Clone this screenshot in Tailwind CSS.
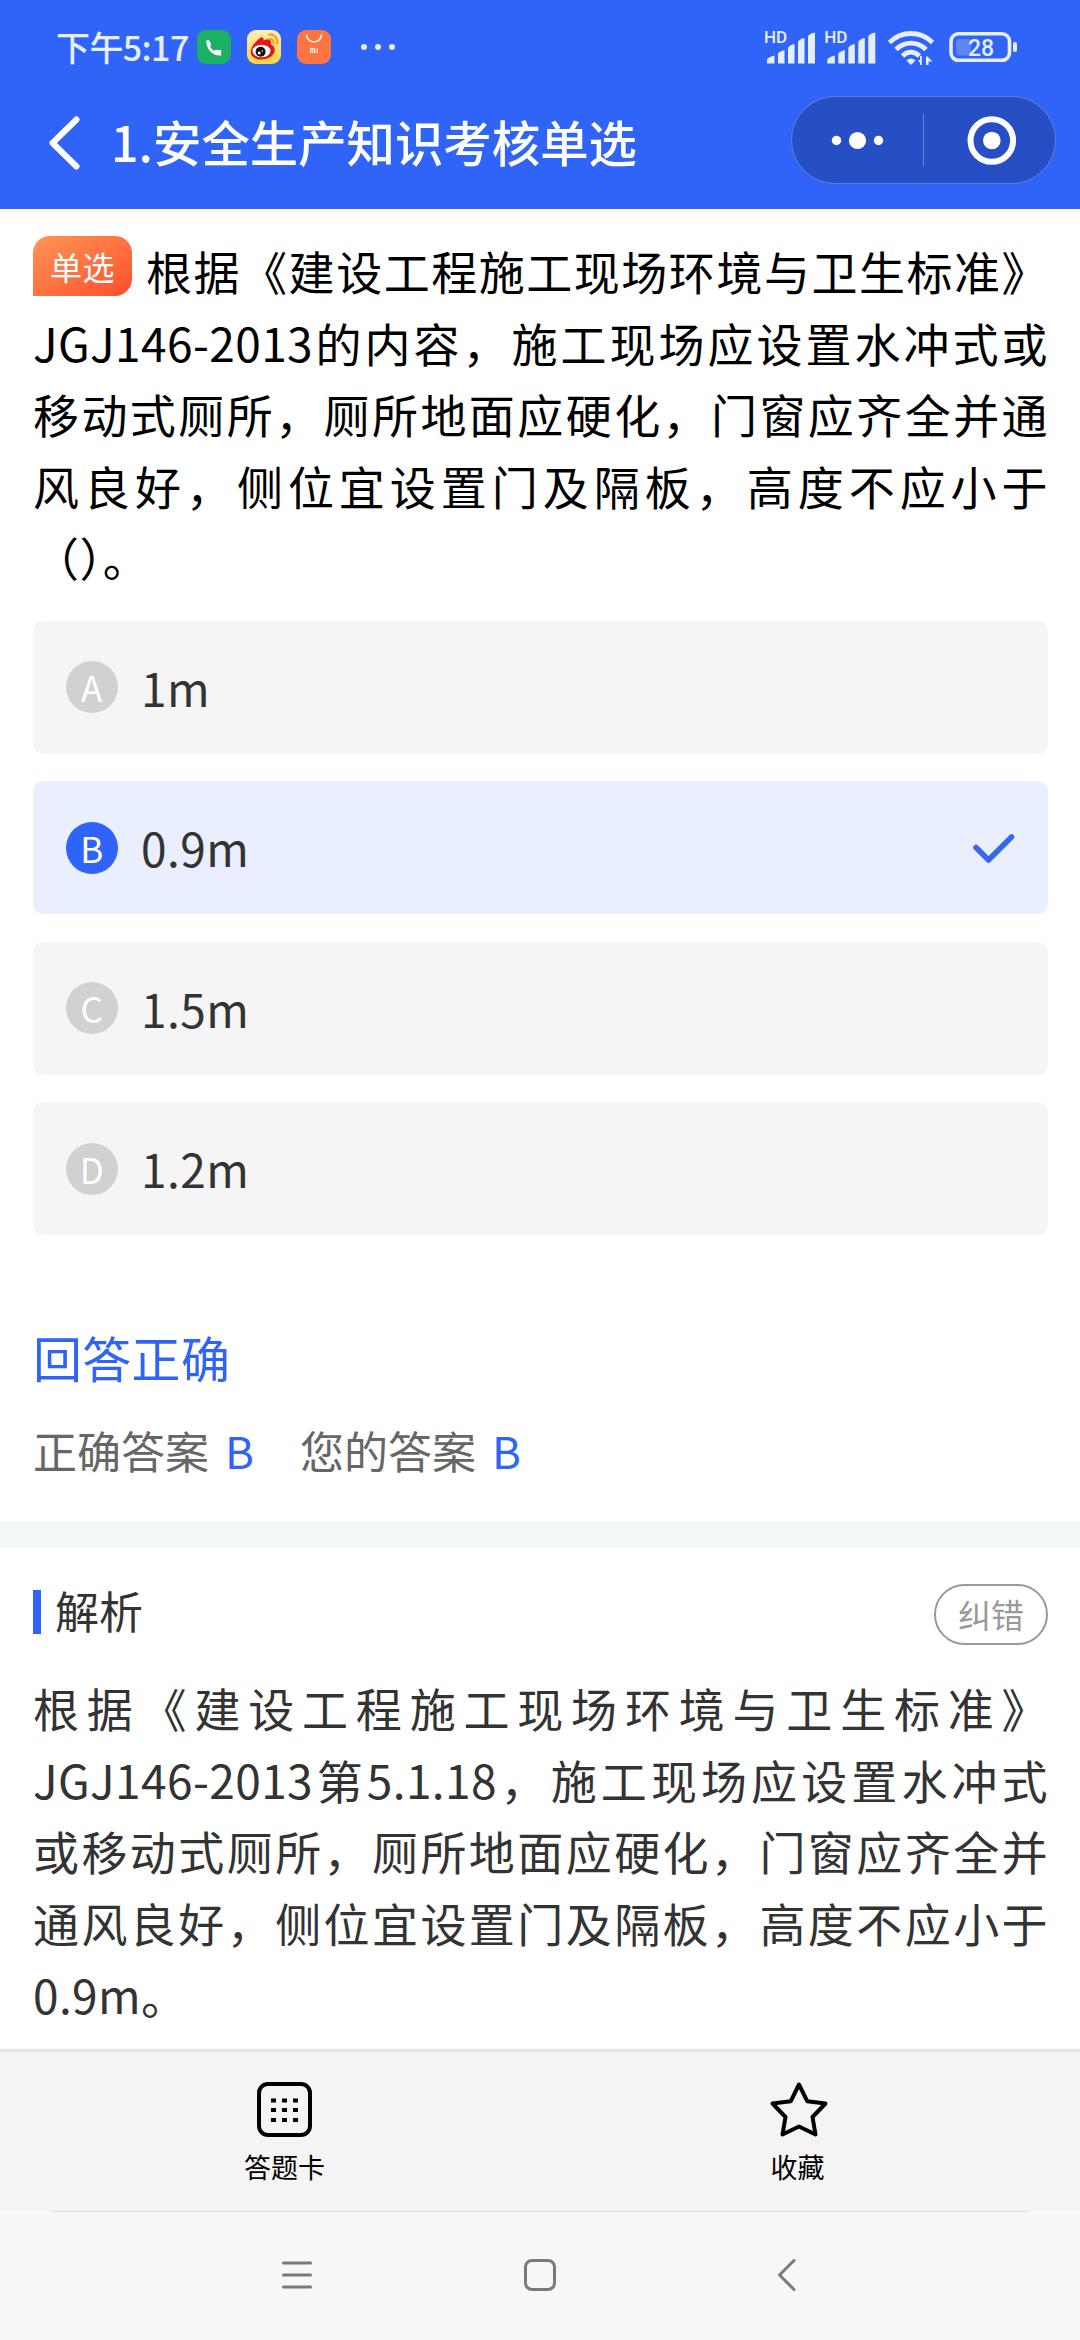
<!DOCTYPE html>
<html lang="zh-CN">
<head>
  <meta charset="UTF-8" />
  <meta name="viewport" content="width=device-width, initial-scale=1.0" />
  <title>安全生产知识考核单选</title>
  <script src="https://cdn.jsdelivr.net/npm/@tailwindcss/browser@4"></script>
</head>
<body class="w-[1080px] h-[2340px] overflow-hidden bg-white text-black font-['Noto_Sans_CJK_SC',sans-serif] flex flex-col">

  <!-- Header -->
  <header class="h-[209px] shrink-0 bg-[#3064f8] text-white">
    <!-- Status bar -->
    <div class="h-[94px] pl-[56px] pr-[62px] flex items-center justify-between">
      <div class="flex items-center">
        <span class="w-[141px] text-[34px] leading-none font-medium text-[#e6edff] whitespace-nowrap tracking-[-0.6px]">下午5:17</span>
        <svg class="w-[34px] h-[34px]" viewBox="0 0 34 34">
          <rect width="34" height="34" rx="9" fill="#1bb063" />
          <path d="M9.2 11.2c.8-1.6 2.4-1.6 3.2-.4l1.6 3c.5 1-.2 1.8-.9 2.4.6 2 2.4 3.9 4.4 4.6.6-.7 1.5-1.3 2.5-.7h4.200v5.300c-7.500 1.500-15-6-15-14.200z" fill="#fff" />
        </svg>
        <svg class="w-[34px] h-[34px] ml-4" viewBox="0 0 34 34">
          <defs>
            <linearGradient id="wb" x1="0" y1="0" x2="0" y2="1">
              <stop offset="0" stop-color="#fdeebb" />
              <stop offset="1" stop-color="#ffd33c" />
            </linearGradient>
          </defs>
          <rect width="34" height="34" rx="9" fill="url(#wb)" />
          <path d="M4 20c1-5 5-9 9-12 2-1.5 4-.5 3.500 2.500 3-1.500 7-2 7.500 1.500l-.3 2.500c3 1 4.500 3.500 4 6.500-.8 5-6.700 8.500-13.700 8.500S2.500 25.500 4 20z" fill="#e6161c" />
          <ellipse cx="14.500" cy="21" rx="9" ry="6.300" fill="#fff" />
          <circle cx="13.600" cy="21.800" r="5" fill="#111" />
          <circle cx="12.200" cy="23" r="1.500" fill="#fff" />
          <circle cx="15.300" cy="21" r=".8" fill="#fff" />
          <path d="M22 4.500c5-.8 9 3.500 8.300 9M22.500 9c2.500-.4 4.300 1.700 3.900 4.200" fill="none" stroke="#f5a21b" stroke-width="2.200" stroke-linecap="round" />
        </svg>
        <svg class="w-[34px] h-[34px] ml-4" viewBox="0 0 34 34">
          <rect width="34" height="34" rx="9" fill="#ff7440" />
          <path d="M9.500 4.500c0 4 3.500 7.500 7.500 7.500s7.500-3.500 7.500-7.500" fill="none" stroke="#fff" stroke-width="1.600" />
          <path d="M13.600 23v-4.200h2.900q1.200 0 1.200 1.200v3M15.700 20.500v2.500M20.200 18.300v4.700" fill="none" stroke="#fff" stroke-width="1.200" />
        </svg>
        <svg class="w-9 h-2 ml-[29px]" viewBox="0 0 36 8" fill="#e6edff">
          <circle cx="4" cy="4" r="3" /><circle cx="18" cy="4" r="3" /><circle cx="32" cy="4" r="3" />
        </svg>
      </div>

      <!-- Signal, wifi, battery -->
      <svg class="w-[254px] h-[40px]" viewBox="764 27 254 40" fill="#e6edff">
        <g>
          <text x="764" y="43" font-family="Roboto" font-size="17" font-weight="500">HD</text>
          <path d="M767 63.500v-3.500q0-2.500 7.500-4.500v8zM778 63.500v-9.500q0-2 6.500-4v13.500zM788 63.500v-15q0-3 6.500-4.500v19.500zM798 63.500v-21q0-3 6.500-4.500v25.500zM808 63.500v-26.500q0-3 7-4.500v31z" />
        </g>
        <g transform="translate(60.300 0)">
          <text x="764" y="43" font-family="Roboto" font-size="17" font-weight="500">HD</text>
          <path d="M767 63.500v-3.500q0-2.500 7.500-4.500v8zM778 63.500v-9.500q0-2 6.500-4v13.500zM788 63.500v-15q0-3 6.500-4.500v19.500zM798 63.500v-21q0-3 6.500-4.500v25.500zM808 63.500v-26.500q0-3 7-4.500v31z" />
        </g>
        <path d="M889.500 42.500c12-12 31-12 43 0M896 49.500c8.500-8.500 21.500-8.500 30 0M902.500 56c5-5 11.500-5 17 0" fill="none" stroke="#e6edff" stroke-width="4.800" />
        <path d="M906.500 60.500q4.500-4 9 0l-4.500 4.500zM920 65v-2l-2-3h2v-4h1.800v9zM926 65v-8.500h1.500l5 5h-4v3.500z" />
        <rect x="951" y="33.800" width="58.500" height="26.500" rx="7.500" fill="none" stroke="#e6edff" stroke-width="3.600" />
        <rect x="956" y="39" width="15" height="16.500" rx="3" fill-opacity=".25" />
        <rect x="1013" y="42" width="4" height="10" rx="2" />
        <text x="981" y="55.800" text-anchor="middle" font-family="Roboto" font-size="23" font-weight="500">28</text>
      </svg>
    </div>

    <!-- Title row -->
    <div class="h-[94px] pl-[48px] pr-[24px] flex items-center">
      <svg class="w-8 h-[54px] mt-[4px]" viewBox="0 0 32 54" fill="none" stroke="#fff" stroke-width="6" stroke-linecap="round" stroke-linejoin="round">
        <path d="M28.500 3.500L4.500 27L28.500 50.500" />
      </svg>
      <h1 class="ml-[31px] text-[48.400px] leading-none font-medium whitespace-nowrap">1.安全生产知识考核单选</h1>
      <div class="ml-auto mb-[2px] w-[265px] h-[88px] rounded-full border border-white/25 bg-[#274fc5]">
        <svg class="w-full h-full" viewBox="1 1 263 86" fill="#fff">
          <circle cx="45.500" cy="44.500" r="4.700" />
          <circle cx="66.500" cy="44.500" r="8.600" />
          <circle cx="87.500" cy="44.500" r="4.700" />
          <rect x="132" y="18" width="1" height="52" fill-opacity=".3" />
          <circle cx="200.800" cy="44.500" r="21.300" fill="none" stroke="#fff" stroke-width="6" />
          <circle cx="200.800" cy="44.500" r="8.800" />
        </svg>
      </div>
    </div>
  </header>

  <main class="h-[1840px] shrink-0 overflow-hidden">
    <!-- Question -->
    <section class="pl-[33px] pr-[32px] pt-[26px]">
      <div class="text-[46px] leading-[71.600px] whitespace-nowrap tracking-[0.4px]">
        <div class="flex">
          <span class="w-[99px] h-[60px] mt-px shrink-0 mr-[14px] rounded-t-[17px] rounded-br-[17px] bg-linear-to-br from-[#ff9455] to-[#ff4b2b] text-white text-[32px] leading-[61px] text-center">单选</span>
          <p class="grow [text-align-last:justify]">根据《建设工程施工现场环境与卫生标准》</p>
        </div>
        <p class="[text-align-last:justify]">JGJ146-2013的内容，施工现场应设置水冲式或</p>
        <p class="[text-align-last:justify]">移动式厕所，厕所地面应硬化，门窗应齐全并通</p>
        <p class="[text-align-last:justify]">风良好，侧位宜设置门及隔板，高度不应小于</p>
        <p>（）。</p>
      </div>

      <!-- Options -->
      <ul class="mt-[28px] flex flex-col gap-[27.400px] text-[46px] text-[#333] tracking-[0.5px]">
        <li class="h-[133px] px-[33px] rounded-[10px] bg-[#f5f5f5] flex items-center">
          <span class="size-[52px] rounded-full bg-[#d2d0d1] text-white text-[35px] leading-[52px] text-center">A</span>
          <span class="ml-[23px]">1m</span>
        </li>
        <li class="h-[133px] px-[33px] rounded-[10px] bg-[#e9effe] flex items-center">
          <span class="size-[52px] rounded-full bg-[#3064f8] text-white text-[35px] leading-[52px] text-center">B</span>
          <span class="ml-[23px]">0.9m</span>
          <svg class="w-[44px] h-[34px] ml-auto" viewBox="0 0 44 34" fill="none" stroke="#3568ee" stroke-width="5.500" stroke-linecap="round" stroke-linejoin="round">
            <path d="M5 16.500L17.500 29L40.500 6" />
          </svg>
        </li>
        <li class="h-[133px] px-[33px] rounded-[10px] bg-[#f5f5f5] flex items-center">
          <span class="size-[52px] rounded-full bg-[#d2d0d1] text-white text-[35px] leading-[52px] text-center">C</span>
          <span class="ml-[23px]">1.5m</span>
        </li>
        <li class="h-[133px] px-[33px] rounded-[10px] bg-[#f5f5f5] flex items-center">
          <span class="size-[52px] rounded-full bg-[#d2d0d1] text-white text-[35px] leading-[52px] text-center">D</span>
          <span class="ml-[23px]">1.2m</span>
        </li>
      </ul>
    </section>

    <!-- Result -->
    <section class="px-[33px] h-[286px] pt-[86px]">
      <h2 class="text-[49px] leading-[72px] text-[#3064f8] tracking-[0.3px]">回答正确</h2>
      <div class="mt-[27px] flex text-[44px] leading-[60px] text-[#666]">
        <span>正确答案</span>
        <span class="ml-[16px] text-[#3064f8]">B</span>
        <span class="ml-[46px]">您的答案</span>
        <span class="ml-[16px] text-[#3064f8]">B</span>
      </div>
    </section>
    <div class="h-[27px] bg-[#f4f7f8]"></div>

    <!-- Analysis -->
    <section class="pl-[33px] pr-[32px] pt-[36px] text-[#333]">
      <div class="h-[61px] flex items-center justify-between">
        <div class="flex items-center">
          <i class="w-2 h-[44px] mb-[6px] bg-[#3064f8]"></i>
          <h2 class="ml-[14px] mb-[10px] text-[44px] leading-[60px]">解析</h2>
        </div>
        <button class="w-[114px] h-[61px] rounded-full border-2 border-[#999] text-[#999] text-[33px] leading-none">纠错</button>
      </div>
      <div class="mt-[27px] text-[46px] leading-[71.600px] whitespace-nowrap tracking-[0.4px]">
        <p class="[text-align-last:justify]">根据《建设工程施工现场环境与卫生标准》</p>
        <p class="[text-align-last:justify]">JGJ146-2013第5.1.18，施工现场应设置水冲式</p>
        <p class="[text-align-last:justify]">或移动式厕所，厕所地面应硬化，门窗应齐全并</p>
        <p class="[text-align-last:justify]">通风良好，侧位宜设置门及隔板，高度不应小于</p>
        <p>0.9m。</p>
      </div>
    </section>
  </main>

  <!-- Bottom tabs -->
  <footer class="h-[162px] shrink-0 border-t-3 border-[#e4e4e4] bg-[#f4f4f4] pl-[28px] pr-[26px] flex">
    <a class="w-1/2 pt-[29px] flex flex-col items-center">
      <svg class="size-[57px]" viewBox="0 0 57 57">
        <rect x="3" y="3" width="51" height="51" rx="9" fill="none" stroke="#000" stroke-width="4" />
        <path d="M15 17.500h5v4h-5zM26 17.500h5v4h-5zM37 17.500h5v4h-5zM15 27h5v4h-5zM26 27h5v4h-5zM37 27h5v4h-5zM15 37h5v4h-5zM26 37h5v4h-5zM37 37h5v4h-5z" />
      </svg>
      <span class="mt-[9px] text-[27px] leading-[40px]">答题卡</span>
    </a>
    <a class="w-1/2 pt-[29px] flex flex-col items-center">
      <svg class="w-[60px] h-[57px]" viewBox="0 0 60 57" fill="none" stroke="#000" stroke-width="4" stroke-linejoin="round">
        <path d="M31 3.500L39.200 20.200L57.500 22.500L44.500 36L47.500 53.500L31 45.500L14.500 53.500L17.500 36L4.500 22.500L22.800 20.200Z" />
      </svg>
      <span class="mt-[9px] text-[27px] leading-[40px]">收藏</span>
    </a>
  </footer>

  <!-- System navigation -->
  <nav class="grow bg-[#f7f7f7] px-[52px]">
    <div class="h-px bg-[#dcdcdc]"></div>
    <div class="pt-[45px] pl-[228px] flex">
      <svg class="w-9 h-9" viewBox="0 0 36 36" fill="none" stroke="#7a7a7a" stroke-width="3" stroke-linecap="round">
        <path d="M3.500 6H30.500M3.500 18H30.500M3.500 30H30.500" />
      </svg>
      <svg class="w-9 h-9 ml-[206px]" viewBox="0 0 36 36" fill="none" stroke="#7a7a7a" stroke-width="3">
        <rect x="3.500" y="3.500" width="29" height="29" rx="6.500" />
      </svg>
      <svg class="w-9 h-9 ml-[212px]" viewBox="0 0 36 36" fill="none" stroke="#7a7a7a" stroke-width="3" stroke-linecap="round" stroke-linejoin="round">
        <path d="M24 3.500L9.500 18L24 32.500" />
      </svg>
    </div>
  </nav>
</body>
</html>
